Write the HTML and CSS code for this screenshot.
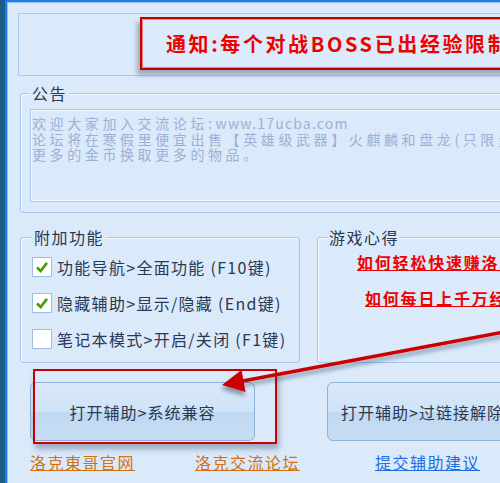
FILE: index.html
```html
<!DOCTYPE html>
<html lang="zh-CN">
<head>
  <meta charset="UTF-8" />
  <title>洛克辅助</title>
  <link rel="stylesheet" href="styles.css">
</head>
<body>

  <div class="window">
    <div class="frame">

      <div class="top-panel">
        <div class="notice">通知:每个对战BOSS已出经验限制,请大家注意</div>
      </div>

      <fieldset class="group board">
        <legend>公告</legend>
        <div class="board-text">
          <p>欢迎大家加入交流论坛:<span class="url">www.17ucba.com</span></p>
          <p>论坛将在寒假里便宜出售【英雄级武器】火麒麟和盘龙(只限量出售)</p>
          <p>更多的金币换取更多的物品。</p>
        </div>
      </fieldset>

      <div class="groups">
        <fieldset class="group extras">
          <legend>附加功能</legend>
          <label class="check-row">
            <span class="box checked"><svg viewBox="0 0 20 20"><path d="M4.5 10.5 L8.5 14.5 L15.5 5.5"/></svg></span>
            功能导航>全面功能 (F10键)
          </label>
          <label class="check-row">
            <span class="box checked"><svg viewBox="0 0 20 20"><path d="M4.5 10.5 L8.5 14.5 L15.5 5.5"/></svg></span>
            隐藏辅助>显示/隐藏 (End键)
          </label>
          <label class="check-row">
            <span class="box"></span>
            笔记本模式>开启/关闭 (F1键)
          </label>
        </fieldset>

        <fieldset class="group tips">
          <legend>游戏心得</legend>
          <a class="tip tip-1" href="#">如何轻松快速赚洛克币</a>
          <a class="tip tip-2" href="#">如何每日上千万经验</a>
        </fieldset>
      </div>

      <div class="actions">
        <button class="btn">打开辅助>系统兼容</button>
        <button class="btn">打开辅助>过链接解除限制</button>
      </div>

      <div class="links">
        <a class="orange" href="#">洛克東哥官网</a>
        <a class="orange" href="#">洛克交流论坛</a>
        <a class="blue" href="#">提交辅助建议</a>
      </div>

    </div>
  </div>

  <!-- red marks drawn over the window -->
  <div class="highlight"></div>
  <svg class="arrow" width="500" height="483" viewBox="0 0 500 483">
    <defs>
      <filter id="shade" x="-10%" y="-50%" width="120%" height="200%">
        <feDropShadow dx="-1" dy="4" stdDeviation="2" flood-color="#1a2a40" flood-opacity="0.45"/>
      </filter>
    </defs>
    <g filter="url(#shade)">
      <line x1="520" y1="329" x2="240" y2="381.5" stroke="#cc0000" stroke-width="3.5"/>
      <polygon points="222,385 241.5,370 245.5,392" fill="#cc0000"/>
    </g>
  </svg>

</body>
</html>
```

FILE: styles.css
```css
* {
  box-sizing: border-box;
}

html, body {
  margin: 0;
  height: 100%;
  overflow: hidden;
}

body {
  position: relative;
  background-color: #dbeafb;
  font-family: "Noto Sans CJK SC", sans-serif;
  font-size: 16px;
  color: #2b3852;
}

.window {
  height: 483px;
  border-left: 5px solid #1b5e87;
}

.frame {
  height: 100%;
  border-left: 2px solid #1f7fe2;
  border-top: 2px solid #1f7fe2;
  box-shadow: inset 1px 1px 0 #8fc1f3;
  padding: 11px 0 0 11px;
}

.top-panel {
  width: 600px;
  height: 63px;
  border: 1px solid #a9c9ee;
  padding: 3px 0 0 121px;
}

.notice {
  width: 520px;
  height: 53px;
  display: flex;
  align-items: center;
  padding-left: 24px;
  border: 2px solid #c40000;
  box-shadow: inset 0 0 0 1px #ee8080, -3px 5px 5px rgba(30, 50, 80, 0.35);
  background-color: #dcebfb;
  color: #ee0000;
  font-size: 20px;
  font-weight: bold;
  letter-spacing: 2.6px;
  white-space: nowrap;
}

.group {
  margin: 0;
  border: 1px solid #a4c6ec;
  border-radius: 3px;
  box-shadow: inset 1px 1px 0 #f7fbff;
  min-width: 0;
}

.group legend {
  padding: 0 2px;
  line-height: 18px;
  background-color: #dbeafb;
  letter-spacing: 1.5px;
  color: #2b3852;
}

.board {
  width: 600px;
  margin: 8px 0 0 2px;
  padding: 7px 0 10px 9px;
}

.board-text {
  height: 93px;
  padding: 6px 0 0 1px;
  border: 1px solid #a9c6ea;
  box-shadow: inset 0 0 0 1px #f5faff;
  color: #9cb1d4;
  font-size: 14px;
  letter-spacing: 3.6px;
  white-space: nowrap;
  overflow: hidden;
}

.board-text p {
  margin: 0;
  height: 15.5px;
  line-height: 15.5px;
}

.board-text .url {
  letter-spacing: 1.2px;
}

.groups {
  display: flex;
  gap: 17px;
  margin: 15px 0 0 2px;
}

.extras {
  flex: 0 0 280px;
  height: 135px;
  padding: 3px 0 0 11px;
}

.tips {
  flex: 0 0 300px;
  height: 135px;
  padding: 6px 0 0 9px;
}

.check-row {
  display: flex;
  align-items: center;
  gap: 5px;
  height: 36px;
  letter-spacing: 1.3px;
  white-space: nowrap;
}

.box {
  width: 20px;
  height: 20px;
  flex: none;
  background-color: #ffffff;
  border: 1px solid #9dbde2;
}

.box svg {
  display: block;
  width: 18px;
  height: 18px;
  fill: none;
  stroke: #4c9a0c;
  stroke-width: 3;
}

.tip {
  display: block;
  line-height: 20px;
  color: #f00000;
  font-weight: 600;
  letter-spacing: 1.8px;
  white-space: nowrap;
}

.tip-1 {
  margin-left: 30px;
}

.tip-2 {
  margin: 16px 0 0 38px;
}

.actions {
  display: flex;
  gap: 72px;
  margin: 19px 0 0 12px;
}

.btn {
  flex: 0 0 225px;
  height: 59px;
  border: 1px solid #8fb2da;
  border-radius: 6px;
  background: linear-gradient(#d9eafa, #cfe3f7 50%, #bfd8f1 51%, #c7ddf4);
  font-family: inherit;
  font-size: 16px;
  letter-spacing: 1px;
  color: #2b3852;
  white-space: nowrap;
  overflow: hidden;
}

.links {
  display: grid;
  grid-template-columns: 165px 180px auto;
  margin: 12px 0 0 12px;
  line-height: 18px;
  letter-spacing: 1.5px;
}

.links a {
  white-space: nowrap;
}

.orange {
  color: #d4700f;
}

.blue {
  color: #1f6fe0;
}

.highlight {
  position: absolute;
  left: 33px;
  top: 369px;
  width: 244px;
  height: 75px;
  border: 2px solid #c80000;
  box-shadow: 2px 5px 6px rgba(30, 50, 80, 0.35);
}

.arrow {
  position: absolute;
  left: 0;
  top: 0;
  pointer-events: none;
}
```
